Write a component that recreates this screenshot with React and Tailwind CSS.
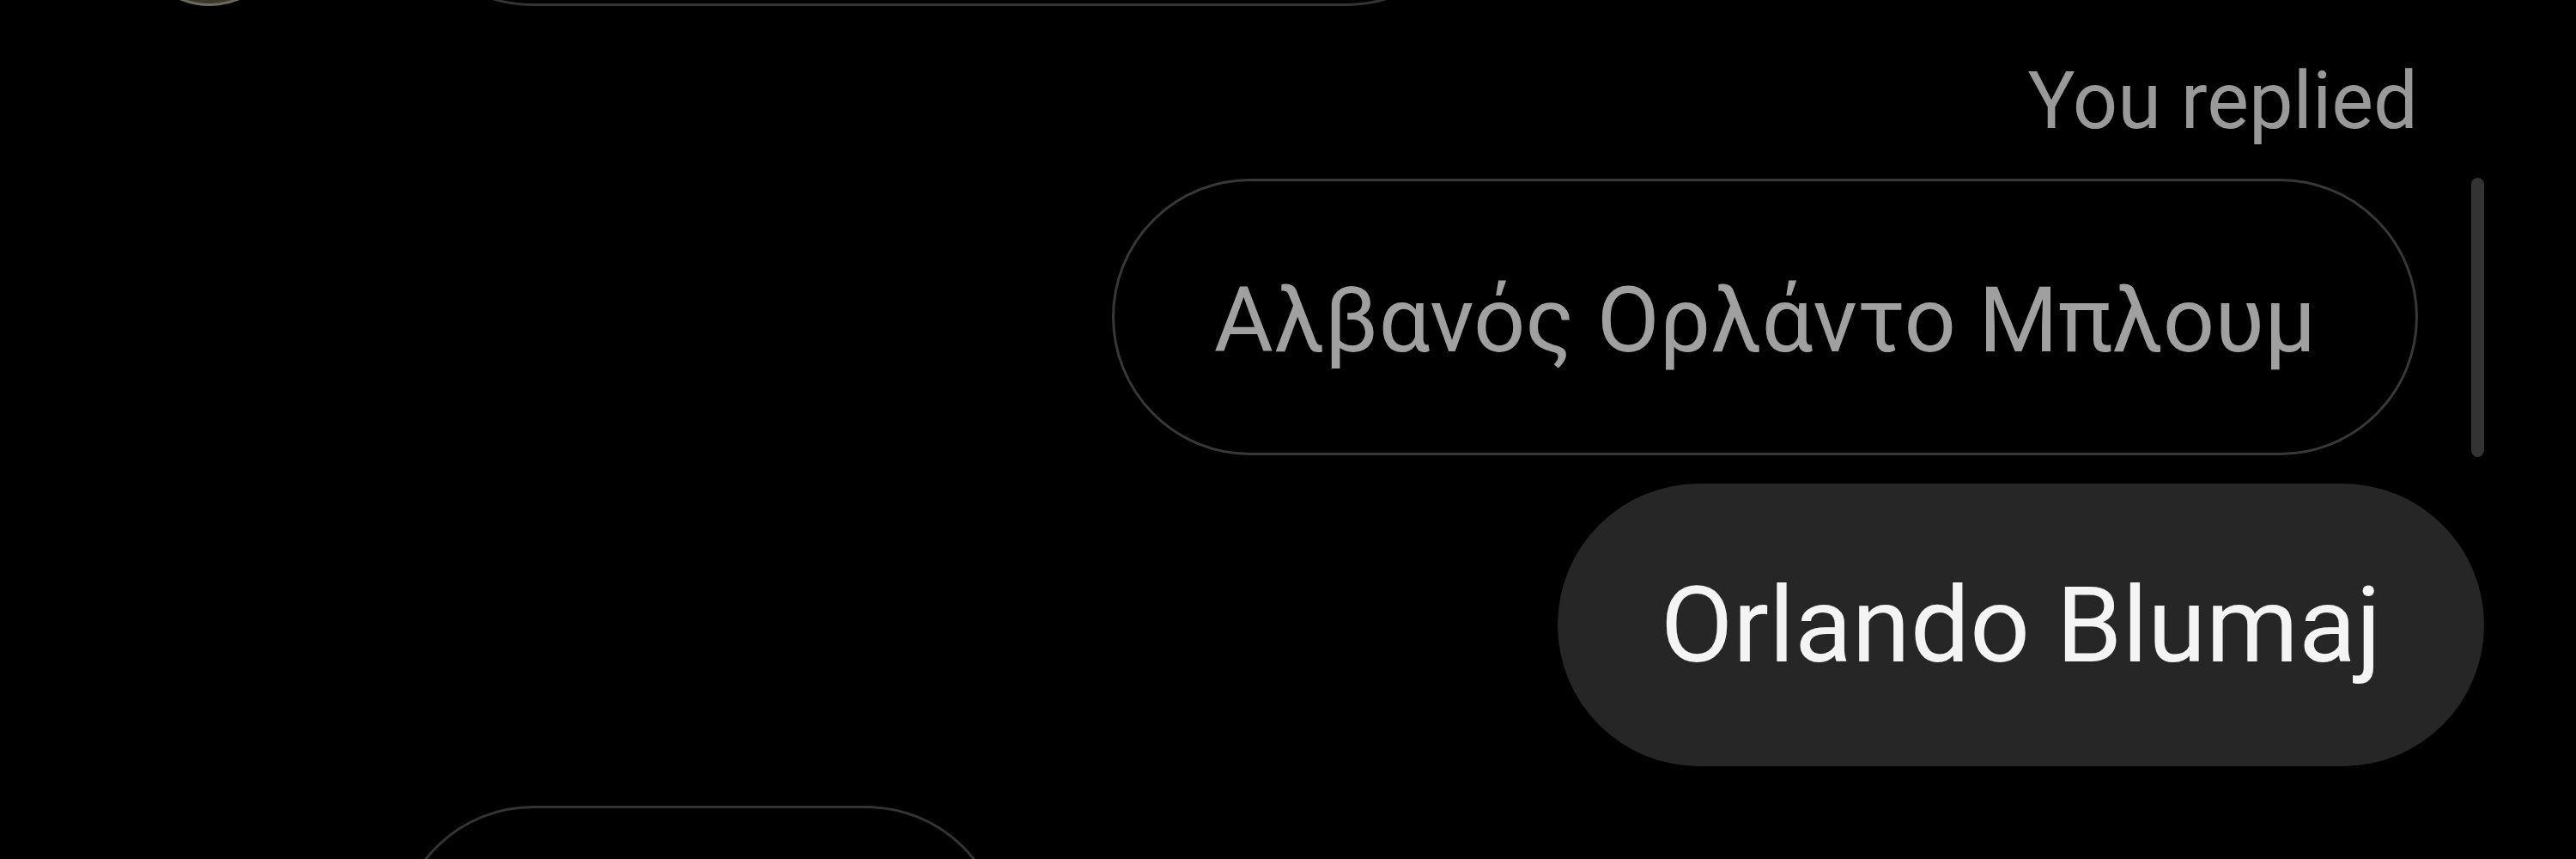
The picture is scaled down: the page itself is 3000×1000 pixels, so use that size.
export default function App() {
  return (
    <div className="relative h-[1000px] w-[3000px] overflow-hidden bg-black font-['Roboto','Noto_Sans',sans-serif]">
      <div className="flex flex-col items-end pr-[107px]">
        {/* previous incoming message, mostly scrolled off */}
        <div className="-mt-[315px] flex items-end self-start pl-[154px]">
          <div className="h-[180px] w-[180px] shrink-0 rounded-full border-[3px] border-[#6b6a5c] bg-[#3a382c]"></div>
          <div className="ml-[125px] h-[322px] w-[1270px] rounded-full border-[3px] border-[#343434]"></div>
        </div>

        <div className="mr-[77px] mt-[57px] whitespace-nowrap text-[92px] leading-[108px] text-[#999999]">
          You replied
        </div>

        <div className="mr-[77px] mt-[36px] flex h-[322px] w-[1521px] items-center justify-center rounded-full border-[3px] border-[#383838] pt-[8px]">
          <span className="whitespace-nowrap text-[106px] leading-[125px] text-[#a0a0a0]">
            Αλβανός Ορλάντο Μπλουμ
          </span>
        </div>

        <div className="mt-[33px] flex h-[329px] w-[1079px] items-center justify-center rounded-full bg-[#262626]">
          <span className="whitespace-nowrap text-[123px] leading-[144px] text-[#f4f4f4]">
            Orlando Blumaj
          </span>
        </div>

        <div className="ml-[460px] mt-[46px] h-[322px] w-[710px] self-start rounded-full border-[3px] border-[#343434]"></div>
      </div>

      {/* scrollbar thumb */}
      <div className="absolute right-[107px] top-[207px] h-[325px] w-[15px] rounded-full bg-[#333333]"></div>
    </div>
  );
}
